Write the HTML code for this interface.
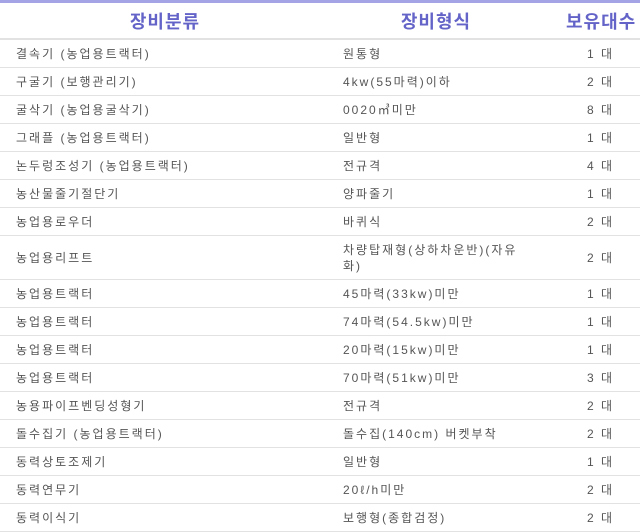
<!DOCTYPE html>
<html><head><meta charset="utf-8"><style>
body{margin:0;background:#fff;width:640px;height:531px;overflow:hidden;font-family:"Liberation Sans","Noto Sans CJK KR",sans-serif;}
table{border-collapse:collapse;table-layout:fixed;width:656px;border-top:3px solid #a3a3e6;}
th{height:35px;color:#6464c8;font-size:18px;font-weight:bold;padding:0;border-bottom:2px solid #e2e2e2;letter-spacing:1px}
td{height:27px;font-size:12px;color:#555;border-bottom:1px solid #e2e2e2;padding:0;line-height:16px;letter-spacing:2px}
td.a{padding-left:16px}
td.b{padding-left:13px;padding-right:12px}
td.c{text-align:right;padding-right:42px}
tr.t td{height:43px}
</style></head><body>
<table>
<col style="width:330px"><col style="width:212px"><col style="width:114px">
<tr><th>장비분류</th><th>장비형식</th><th style="text-align:left;padding-left:24px">보유대수</th></tr>
<tr><td class="a">결속기 (농업용트랙터)</td><td class="b">원통형</td><td class="c">1 대</td></tr>
<tr><td class="a">구굴기 (보행관리기)</td><td class="b">4kw(55마력)이하</td><td class="c">2 대</td></tr>
<tr><td class="a">굴삭기 (농업용굴삭기)</td><td class="b">0020㎥미만</td><td class="c">8 대</td></tr>
<tr><td class="a">그래플 (농업용트랙터)</td><td class="b">일반형</td><td class="c">1 대</td></tr>
<tr><td class="a">논두렁조성기 (농업용트랙터)</td><td class="b">전규격</td><td class="c">4 대</td></tr>
<tr><td class="a">농산물줄기절단기</td><td class="b">양파줄기</td><td class="c">1 대</td></tr>
<tr><td class="a">농업용로우더</td><td class="b">바퀴식</td><td class="c">2 대</td></tr>
<tr class="t"><td class="a">농업용리프트</td><td class="b">차량탑재형(상하차운반)(자유화)</td><td class="c">2 대</td></tr>
<tr><td class="a">농업용트랙터</td><td class="b">45마력(33kw)미만</td><td class="c">1 대</td></tr>
<tr><td class="a">농업용트랙터</td><td class="b">74마력(54.5kw)미만</td><td class="c">1 대</td></tr>
<tr><td class="a">농업용트랙터</td><td class="b">20마력(15kw)미만</td><td class="c">1 대</td></tr>
<tr><td class="a">농업용트랙터</td><td class="b">70마력(51kw)미만</td><td class="c">3 대</td></tr>
<tr><td class="a">농용파이프벤딩성형기</td><td class="b">전규격</td><td class="c">2 대</td></tr>
<tr><td class="a">돌수집기 (농업용트랙터)</td><td class="b">돌수집(140cm) 버켓부착</td><td class="c">2 대</td></tr>
<tr><td class="a">동력상토조제기</td><td class="b">일반형</td><td class="c">1 대</td></tr>
<tr><td class="a">동력연무기</td><td class="b">20ℓ/h미만</td><td class="c">2 대</td></tr>
<tr><td class="a">동력이식기</td><td class="b">보행형(종합검정)</td><td class="c">2 대</td></tr>
</table>
</body></html>
